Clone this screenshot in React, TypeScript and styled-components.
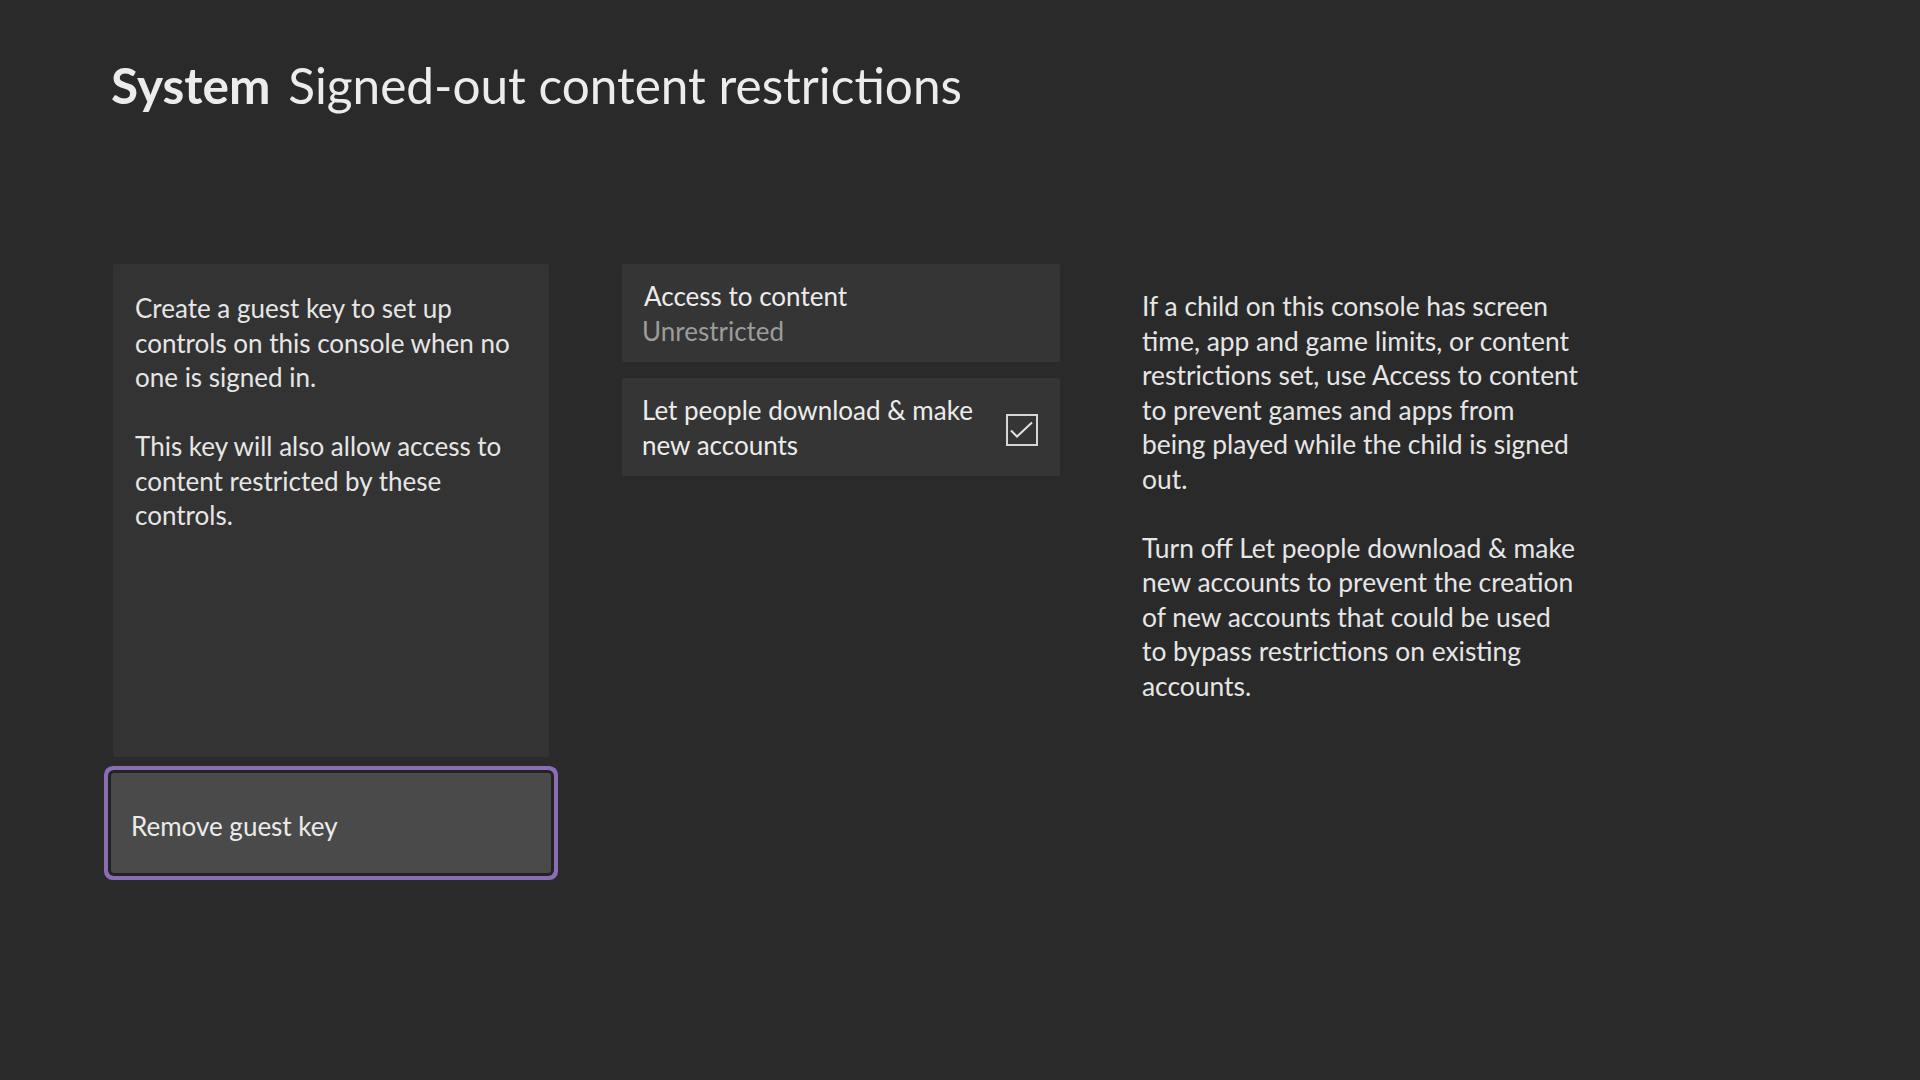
import React from "react";
import styled, { createGlobalStyle } from "styled-components";

const Global = createGlobalStyle`
  html, body {
    margin: 0;
    padding: 0;
    background: #2a2a2a;
  }
  body {
    font-family: Lato, "Liberation Sans", sans-serif;
    color: #e6e6e6;
    -webkit-font-smoothing: antialiased;
  }
`;

const Page = styled.div`
  width: 1920px;
  height: 1080px;
  box-sizing: border-box;
  padding: 56px 0 0 113px;
`;

const Title = styled.h1`
  margin: 0 0 0 -2px;
  font-size: 49.5px;
  line-height: 58px;
  font-weight: 400;
  color: #ececec;
  white-space: nowrap;
`;

const TitleStrong = styled.span`
  font-weight: 700;
  margin-right: 18px;
`;

const Content = styled.div`
  margin-top: 150px;
  display: flex;
  align-items: flex-start;
`;

const Column = styled.div<{ $width: number; $gap?: number }>`
  width: ${(p) => p.$width}px;
  display: flex;
  flex-direction: column;
  gap: ${(p) => p.$gap ?? 16}px;
  margin-right: 73px;
`;

const InfoPanel = styled.div`
  height: 493px;
  box-sizing: border-box;
  background: #333333;
  border-radius: 2px;
  padding: 27px 22px 0 22px;
`;

const Paragraph = styled.p<{ $size?: number }>`
  margin: 0 0 34.5px 0;
  font-size: ${(p) => p.$size ?? 26}px;
  line-height: 34.5px;
`;

const FocusButton = styled.button`
  width: 440px;
  height: 100px;
  margin-left: -2px;
  border: none;
  border-radius: 3px;
  background: #4a4a4a;
  box-shadow: 0 0 0 3px #232323, 0 0 0 7px #8b6db6;
  color: #ebebeb;
  font-family: inherit;
  font-size: 26px;
  text-align: left;
  padding: 5px 0 0 20px;
  cursor: pointer;
`;

const Card = styled.div`
  height: 98px;
  box-sizing: border-box;
  background: #353535;
  border-radius: 2px;
  padding: 15px 22px 0 20px;
  display: flex;
  align-items: flex-start;
  justify-content: space-between;
`;

const CardText = styled.div`
  font-size: 26px;
  line-height: 34.5px;
  color: #ececec;
`;

const CardLabel = styled.div`
  padding-left: 2px;
`;

const CardSub = styled.div`
  color: #9c9c9c;
`;

const Check = styled.div`
  flex: none;
  width: 32px;
  height: 32px;
  box-sizing: border-box;
  border: 2px solid #d6d6d6;
  margin-top: 21px;
  display: flex;
  align-items: center;
  justify-content: center;
`;

const SideText = styled.div`
  width: 480px;
  padding: 25px 0 0 9px;
`;

export default function App() {
  return (
    <>
      <Global />
      <Page>
        <Title>
          <TitleStrong>System</TitleStrong>Signed-out content restrictions
        </Title>
        <Content>
          <Column $width={436}>
            <InfoPanel>
              <Paragraph>
                Create a guest key to set up
                <br />
                controls on this console when no
                <br />
                one is signed in.
              </Paragraph>
              <Paragraph>
                This key will also allow access to
                <br />
                content restricted by these
                <br />
                controls.
              </Paragraph>
            </InfoPanel>
            <FocusButton>Remove guest key</FocusButton>
          </Column>
          <Column $width={438}>
            <Card>
              <CardText>
                <CardLabel>Access to content</CardLabel>
                <CardSub>Unrestricted</CardSub>
              </CardText>
            </Card>
            <Card>
              <CardText>
                Let people download &amp; make
                <br />
                new accounts
              </CardText>
              <Check>
                <svg width="28" height="28" viewBox="0 0 28 28">
                  <path
                    d="M3 14.5 L9 20.5 L24 6.5"
                    fill="none"
                    stroke="#e0e0e0"
                    strokeWidth="2"
                  />
                </svg>
              </Check>
            </Card>
          </Column>
          <SideText>
            <Paragraph $size={26.4}>
              If a child on this console has screen
              <br />
              time, app and game limits, or content
              <br />
              restrictions set, use Access to content
              <br />
              to prevent games and apps from
              <br />
              being played while the child is signed
              <br />
              out.
            </Paragraph>
            <Paragraph $size={26.4}>
              Turn off Let people download &amp; make
              <br />
              new accounts to prevent the creation
              <br />
              of new accounts that could be used
              <br />
              to bypass restrictions on existing
              <br />
              accounts.
            </Paragraph>
          </SideText>
        </Content>
      </Page>
    </>
  );
}
